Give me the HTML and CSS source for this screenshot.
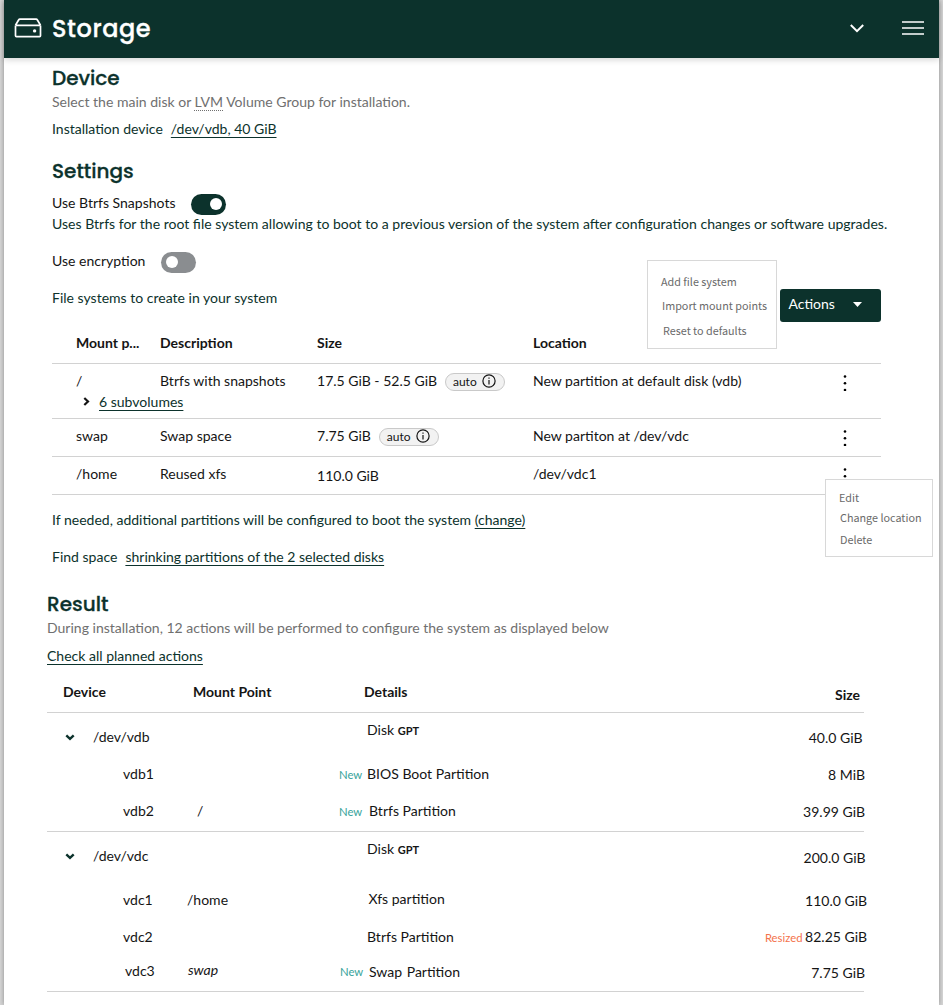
FILE: index.html
```
<!DOCTYPE html>
<html lang="en">
<head>
<meta charset="utf-8">
<title>Storage</title>
<link rel="stylesheet" href="styles.css">
</head>
<body>
<div class="page">
  <header class="topbar">
    <svg class="drive" viewBox="0 0 28 20" width="28" height="20"><path d="M1.500 7.600v10.200c0 .5.400.9.900.9h23.200c.5 0 .9-.4.9-.9V7.600M1.500 7.200 4.600 2c.3-.5.7-.8 1.300-.8h16.200c.6 0 1 .3 1.300.8l3.100 5.200M1.500 7.400h25"/><circle cx="20.600" cy="12.900" r="1.700"/></svg>
    <h1>Storage</h1>
    <svg class="caret" viewBox="0 0 14 9" width="14" height="9"><path d="m.8 1 6.200 6.200L13.200 1"/></svg>
    <svg class="burger" viewBox="0 0 22 16" width="22" height="16"><path d="M0 2h22M0 8h22M0 14h22"/></svg>
  </header>

  <main>
    <section class="device">
      <h2>Device</h2>
      <p class="muted">Select the main disk or <abbr>LVM</abbr> Volume Group for installation.</p>
      <p class="line green"><span>Installation device</span><a>/dev/vdb, 40 GiB</a></p>
    </section>

    <section class="settings">
      <h2>Settings</h2>
      <div class="toggle-row"><span>Use Btrfs Snapshots</span><i class="switch on"></i></div>
      <p class="green wide">Uses Btrfs for the root file system allowing to boot to a previous version of the system after configuration changes or software upgrades.</p>
      <div class="toggle-row second"><span>Use encryption</span><i class="switch"></i></div>
      <div class="fs-bar">
        <p class="green">File systems to create in your system</p>
        <div class="actions">
          <button>Actions<svg viewBox="0 0 8 5" width="9" height="5" preserveAspectRatio="none"><path d="M0 0h8L4 5Z"/></svg></button>
          <ul class="menu actions-menu"><li>Add file system</li><li>Import mount points</li><li>Reset to defaults</li></ul>
        </div>
      </div>

      <div class="fs-table">
        <div class="fs-row head"><b>Mount p...</b><b>Description</b><b>Size</b><b>Location</b></div>
        <div class="fs-row tall">
          <div>/<div class="sub"><svg viewBox="0 0 7 9" width="7" height="9"><path d="m1.300 1 3.700 3.500L1.300 8"/></svg><a>6 subvolumes</a></div></div>
          <div>Btrfs with snapshots</div>
          <div class="size">17.5 GiB - 52.5 GiB<span class="chip">auto<svg viewBox="0 0 14 14" width="14" height="14"><circle cx="7" cy="7" r="6.100"/><path d="M7 6v4.500M7 3.500v1.300"/></svg></span></div>
          <div>New partition at default disk (vdb)</div>
          <svg class="kebab" viewBox="0 0 4 16" width="4" height="16"><circle cx="2" cy="1.500" r="1.300"/><circle cx="2" cy="8.200" r="1.300"/><circle cx="2" cy="15" r="1.300"/></svg>
        </div>
        <div class="fs-row">
          <div>swap</div>
          <div>Swap space</div>
          <div class="size">7.75 GiB<span class="chip">auto<svg viewBox="0 0 14 14" width="14" height="14"><circle cx="7" cy="7" r="6.100"/><path d="M7 6v4.500M7 3.500v1.300"/></svg></span></div>
          <div>New partiton at /dev/vdc</div>
          <svg class="kebab" viewBox="0 0 4 16" width="4" height="16"><circle cx="2" cy="1.500" r="1.300"/><circle cx="2" cy="8.200" r="1.300"/><circle cx="2" cy="15" r="1.300"/></svg>
        </div>
        <div class="fs-row">
          <div>/home</div>
          <div>Reused xfs</div>
          <div class="low2">110.0 GiB</div>
          <div>/dev/vdc1</div>
          <div class="row-actions">
            <svg class="kebab" viewBox="0 0 4 16" width="4" height="16"><circle cx="2" cy="1.500" r="1.300"/><circle cx="2" cy="8.200" r="1.300"/><circle cx="2" cy="15" r="1.300"/></svg>
            <ul class="menu row-menu"><li>Edit</li><li>Change location</li><li>Delete</li></ul>
          </div>
        </div>
      </div>
      <p class="green boot">If needed, additional partitions will be configured to boot the system <a>(change)</a></p>
      <p class="line green space"><span>Find space</span><a>shrinking partitions of the 2 selected disks</a></p>
    </section>

    <section class="result">
      <h2>Result</h2>
      <p class="muted">During installation, 12 actions will be performed to configure the system as displayed below</p>
      <p class="green check"><a>Check all planned actions</a></p>
      <div class="res-table">
        <div class="res-row head"><b class="h-device">Device</b><b class="h-mount">Mount Point</b><b class="h-details">Details</b><b class="h-size">Size</b></div>
        <div class="group">
          <div class="res-row disk"><span class="dev"><svg viewBox="0 0 10 7" width="10" height="7"><path d="m1.300 1.300 3.700 3.500 3.700-3.500"/></svg>/dev/vdb</span><span></span><em></em><span class="up7">Disk <b>GPT</b></span><span class="num in2 low1">40.0 GiB</span></div>
          <div class="res-row"><span class="child">vdb1</span><span></span><em>New</em><span>BIOS Boot Partition</span><span class="num out1 low1">8 MiB</span></div>
          <div class="res-row last"><span class="child">vdb2</span><span class="root">/</span><em>New</em><span class="nudge">Btrfs Partition</span><span class="num out1 low1">39.99 GiB</span></div>
        </div>
        <div class="group">
          <div class="res-row disk"><span class="dev"><svg viewBox="0 0 10 7" width="10" height="7"><path d="m1.300 1.300 3.700 3.500 3.700-3.500"/></svg>/dev/vdc</span><span></span><em></em><span class="up7">Disk <b>GPT</b></span><span class="num out2 low2">200.0 GiB</span></div>
          <div class="res-row disk"><span class="child">vdc1</span><span>/home</span><em></em><span class="xfs">Xfs partition</span><span class="num out3 low1">110.0 GiB</span></div>
          <div class="res-row"><span class="child">vdc2</span><span></span><em></em><span>Btrfs Partition</span><span class="num out3"><em class="resized">Resized</em> 82.25 GiB</span></div>
          <div class="res-row final"><span class="child vdc3">vdc3</span><span class="swap">swap</span><em class="new3">New</em><span class="nudge low1 spaced">Swap Partition</span><span class="num out1 low2">7.75 GiB</span></div>
        </div>
      </div>
    </section>
  </main>
</div>
</body>
</html>
```
FILE: styles.css
```
* { box-sizing: border-box; }
body { margin: 0; background: #d6d6d6; font: 14.02px/20px Lato, "Noto Sans", sans-serif; color: #151515; overflow: hidden; }
h1, h2, p, ul { margin: 0; padding: 0; }
.page { width: 935px; height: 1005px; margin-left: 4px; background: #fff; box-shadow: 0 0 5px rgba(0,0,0,.35); }
svg { fill: none; stroke: currentColor; flex: none; }

.topbar { height: 58px; background: #0c322c; color: #fff; display: flex; align-items: center; padding: 0 15px 2px 10px; box-shadow: 0 2px 6px rgba(0,0,0,.16); }
h1, h2 { font-family: Poppins, Inter, sans-serif; font-weight: 500; -webkit-text-stroke: .3px currentColor; }
h1 { font-size: 24px; line-height: 36px; margin: 2px auto 0 10px; letter-spacing: .55px; }
.drive { stroke-width: 1.7; }
.drive circle { fill: #fff; stroke: none; }
.caret { stroke-width: 2; margin-right: 38px; }
.burger { stroke-width: 1.6; }

main { padding-left: 48px; }
h2 { font-size: 20px; line-height: 24px; color: #0c322c; letter-spacing: 0; }
.green { color: #0c322c; }
.muted { color: #707070; }
.device { padding-top: 8px; height: 101px; }
.device .muted { margin-top: 2px; font-size: 14.04px; }
.device .line { margin-top: 7px; }
.line { display: flex; gap: 8px; }
a { color: #0c322c; text-decoration: underline 1px; text-underline-offset: 3px; }
abbr { text-decoration: underline dotted 1px; text-underline-offset: 3px; }

.settings { height: 433px; }
.toggle-row { display: flex; gap: 15.500px; height: 21px; margin-top: 10px; }
.toggle-row.second { margin-top: 17px; }
.switch { width: 35px; height: 21px; border-radius: 11px; background: #8a8d90; margin-top: 1px; padding: 4px 5px; flex: none; }
.switch::before { content: ""; display: block; width: 12px; height: 12px; border-radius: 50%; background: #fff; }
.switch.on { background: #0c322c; padding-left: 19px; }
.wide { white-space: nowrap; font-size: 14.04px; }
.fs-bar { display: flex; justify-content: space-between; width: 829px; height: 34px; margin-top: 16px; }
.actions { position: relative; margin-top: 1px; }
button { display: flex; align-items: center; justify-content: space-between; width: 101px; height: 33px; padding: 0 19px 3px 8.500px; border: 0; border-radius: 3px; background: #0c322c; color: #fff; font: 14px/20px Lato, sans-serif; }
button svg { fill: #fff; stroke: none; }
.menu { position: absolute; list-style: none; background: #fff; border: 1px solid #d8d8d8; color: #6a6a6a; font: 10.8px/20px "Noto Sans CJK SC", sans-serif; white-space: nowrap; }
.actions-menu { right: 104px; top: -29px; width: 130px; height: 89px; padding: 10px 0 0 13px; }
.actions-menu li { height: 24px; }
.actions-menu li:nth-child(2) { padding-left: 1px; }
.actions-menu li:nth-child(3) { padding: 1px 0 0 2px; }

.fs-table { width: 829px; margin-top: 4px; }
.fs-row { display: grid; grid-template-columns: 84px 157px 216px 1fr 38px; height: 38px; padding: 7px 0 0 24px; border-bottom: 1px solid #d2d2d2; }
.fs-row.head { height: 38px; }
.fs-row.tall { height: 55px; }
.sub { display: flex; align-items: center; gap: 9px; height: 21px; padding: 0 0 0 7px; white-space: nowrap; }
.sub svg { stroke-width: 2.2; }
.size { display: flex; gap: 8px; height: 20px; }
.chip { display: flex; align-items: flex-start; gap: 5px; height: 18px; width: 60px; margin-top: 2px; padding: 0 0 0 7px; font-size: 12px; line-height: 16px; background: #f2f2f2; border: 1px solid #c9c9c9; border-radius: 9px; }
.chip svg { stroke-width: 1.2; margin-left: .5px; }
.kebab { fill: #000; stroke: none; margin-top: 4px; }
.row-actions { position: relative; }
.row-menu { left: -18px; top: 15px; width: 108px; height: 78px; padding: 7px 0 0 13px; }
.row-menu li { height: 20px; }
.row-menu li:nth-child(2) { padding-left: 1px; height: 22px; }
.row-menu li:nth-child(3) { padding-left: 1px; }
.boot { margin-top: 15px; }
.space { margin-top: 17px; }

.result { margin-left: -5px; }
.result .muted { margin-top: 2px; }
.check { margin-top: 8px; }
.res-table { width: 817px; margin-top: 14px; }
.res-row { display: grid; grid-template-columns: 140px 152px 28px 1fr 130px; height: 37px; padding-top: 7px; white-space: nowrap; }
.res-row.head { grid-template-columns: 130px 171px 1fr 60px; height: 33px; padding: 2px 4px 0 16px; border-bottom: 1px solid #d2d2d2; }
.h-size { text-align: right; padding-top: 3px; }
.group { border-bottom: 1px solid #d2d2d2; }
.res-row.disk { height: 44px; padding-top: 14px; }
.res-row.final { height: 34px; padding-top: 4px; }
.dev { display: flex; align-items: center; gap: 18px; padding-left: 18px; height: 20px; }
.dev svg { stroke-width: 2.4; color: #0c322c; }
.child { padding-left: 76px; }
.vdc3 { padding-left: 78px; }
.root { padding-left: 10px; }
.swap { font-style: italic; padding-left: 1px; margin-top: -1px; }
em { font-style: normal; font-size: 11.3px; color: #37a39b; padding-top: 1px; }
.new3 { padding-left: 1px; }
.up7 { margin-top: -7px; }
.up7 b { font-size: 11px; }
.nudge { padding-left: 2px; }
.spaced { word-spacing: 1px; }
.xfs { padding-left: 1.500px; margin-top: -1px; }
.num { text-align: right; }
.in2 { margin-right: 1.500px; }
.out1 { margin-right: -1px; }
.out2 { margin-right: -1.500px; }
.out3 { margin-right: -3px; }
.low1 { padding-top: 1px; }
.low2 { padding-top: 2px; }
.resized { color: #f4724b; margin-right: -1px; }
```
